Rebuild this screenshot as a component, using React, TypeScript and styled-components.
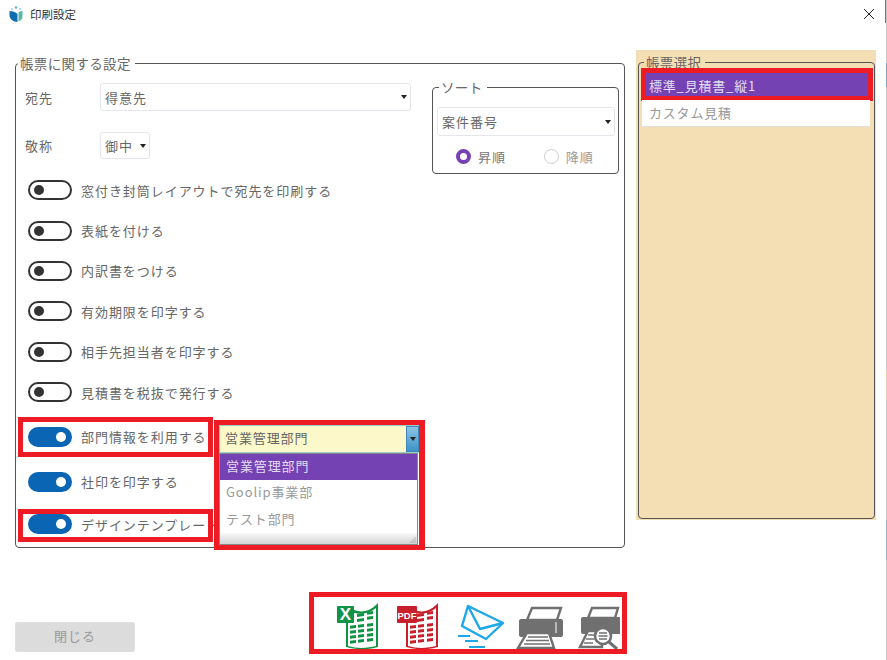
import React from 'react';
import styled, { createGlobalStyle } from 'styled-components';

const FONT = '"Noto Sans CJK JP", "Noto Sans", sans-serif';
const RED = '#ed1c24';
const PURPLE = '#7542b3';
const GRAY_ICON = '#707070';

const GlobalStyle = createGlobalStyle`
  html, body {
    margin: 0;
    padding: 0;
    background: #fff;
  }
  body {
    font-family: ${FONT};
    color: #666;
    overflow: hidden;
  }
`;

const Page = styled.div`
  width: 887px;
  height: 660px;
  overflow: hidden;
  display: flex;
  flex-direction: column;
`;

const TitleBar = styled.header`
  height: 28px;
  display: flex;
  align-items: center;
  padding: 0 13px 0 9px;
  gap: 7px;
  font-size: 11.5px;
  color: #333;
`;

const TitleText = styled.span`
  flex: 1;
`;

const CloseButton = styled.button`
  border: 0;
  background: none;
  padding: 0;
  width: 10px;
  height: 10px;
  display: flex;
`;

const Body = styled.main`
  flex: 1;
  display: flex;
  align-items: flex-start;
  padding: 22px 11px 0 15px;
  gap: 11px;
`;

const Group = styled.fieldset`
  margin: 0;
  padding: 0;
  border: 1.5px solid #555;
  border-radius: 4px;
  min-width: 0;
`;

const GroupTitle = styled.legend`
  font-size: 13.5px;
  line-height: 15px;
  letter-spacing: 0.35px;
  padding: 0 4px 0 2px;
  margin-left: 2px;
  color: #666;
`;

const SettingsGroup = styled(Group)`
  width: 610px;
  height: 492px;
  margin-top: 6px;
  box-sizing: border-box;
  position: relative;
`;

const TopArea = styled.div`
  display: flex;
  justify-content: space-between;
  padding: 12px 5px 0 9px;
`;

const FormColumn = styled.div`
  width: 386px;
  display: flex;
  flex-direction: column;
  gap: 21px;
`;

const FieldRow = styled.div`
  display: flex;
  align-items: center;
`;

const FieldLabel = styled.label`
  width: 75px;
  font-size: 13px;
  letter-spacing: 1px;
`;

const Select = styled.div<{ $width: number; $height?: number }>`
  width: ${(p) => p.$width}px;
  height: ${(p) => p.$height ?? 28}px;
  box-sizing: border-box;
  border: 1px solid #e4e6ec;
  border-radius: 3px;
  display: flex;
  align-items: center;
  justify-content: space-between;
  padding: 0 3px 0 4px;
  font-size: 13px;
  letter-spacing: 1px;
  color: #666;
`;

const Caret = styled.span`
  width: 0;
  height: 0;
  border-left: 3.5px solid transparent;
  border-right: 3.5px solid transparent;
  border-top: 4px solid #222;
`;

const SortGroup = styled(Group)`
  width: 187px;
  height: 94px;
  box-sizing: border-box;
  margin-top: -3px;
  padding: 12px 4px 0;
`;

const RadioRow = styled.div`
  display: flex;
  margin-top: 11px;
  padding-left: 19px;
  gap: 38px;
`;

const RadioItem = styled.span<{ $checked?: boolean }>`
  display: flex;
  align-items: center;
  gap: 7px;
  font-size: 13px;
  letter-spacing: 0.9px;
  color: ${(p) => (p.$checked ? '#777' : '#999')};
`;

const RadioMark = styled.span<{ $checked?: boolean }>`
  width: 15px;
  height: 15px;
  box-sizing: border-box;
  border-radius: 50%;
  border: ${(p) => (p.$checked ? `4px solid ${PURPLE}` : '1.5px solid #ccc')};
`;

const ToggleList = styled.div`
  display: flex;
  flex-direction: column;
  margin-top: -4px;
  padding-left: 12px;
`;

const ToggleRow = styled.div<{ $frame?: 'full' | 'tight'; $shift?: number }>`
  height: 40.4px;
  margin-top: ${(p) => p.$shift ?? 0}px;
  display: flex;
  align-items: center;
  gap: 9px;
  position: relative;
  font-size: 13px;
  letter-spacing: 0.95px;
  white-space: nowrap;

  ${(p) =>
    p.$frame &&
    `&::after {
      content: '';
      position: absolute;
      left: -10px;
      width: 195px;
      box-sizing: border-box;
      border: 5px solid ${RED};
      top: ${p.$frame === 'full' ? '1px' : '5px'};
      height: ${p.$frame === 'full' ? '40px' : '33px'};
    }`}
`;

const Toggle = styled.span<{ $on?: boolean }>`
  width: 44px;
  height: 20px;
  flex: none;
  box-sizing: border-box;
  border-radius: 10px;
  border: 2px solid ${(p) => (p.$on ? '#0b65b5' : '#333')};
  background: ${(p) => (p.$on ? '#0b65b5' : '#fff')};
  display: flex;
  align-items: center;
  justify-content: ${(p) => (p.$on ? 'flex-end' : 'flex-start')};
  padding: 0 4px;

  &::before {
    content: '';
    width: 10px;
    height: 10px;
    border-radius: 50%;
    background: ${(p) => (p.$on ? '#fff' : '#333')};
  }
`;

const Combo = styled.div`
  position: absolute;
  left: 198px;
  top: 349px;
  width: 211px;
  height: 130px;
  box-sizing: border-box;
  border: 5px solid ${RED};
  border-right-width: 6px;
  background: #fff;
  display: flex;
  flex-direction: column;
  z-index: 2;
`;

const ComboInput = styled.div`
  height: 28px;
  flex: none;
  display: flex;
  background: #fdf8c9;
  border: 1px solid #9cc;
  border-right: 0;
  box-sizing: border-box;
  font-size: 13px;
  letter-spacing: 0.9px;
  color: #666;
`;

const ComboText = styled.span`
  flex: 1;
  padding-left: 5px;
  line-height: 24px;
`;

const ComboArrow = styled.span`
  width: 13px;
  background: linear-gradient(#8cc4e4, #3d93c9);
  border: 1px solid #3d88b8;
  box-sizing: border-box;
  display: flex;
  align-items: center;
  justify-content: center;
`;

const ComboPanel = styled.div`
  flex: 1;
  margin-right: 1px;
  border: 1px solid #888;
  display: flex;
  flex-direction: column;
`;

const ComboOption = styled.div<{ $active?: boolean }>`
  height: 26.4px;
  flex: none;
  padding-left: 6px;
  line-height: 23px;
  font-size: 13px;
  letter-spacing: 0.9px;
  background: ${(p) => (p.$active ? PURPLE : '#fff')};
  color: ${(p) => (p.$active ? '#e4dcf2' : '#999')};
`;

const ComboFooter = styled.div`
  flex: 1;
  background: linear-gradient(#f8f8f8, #d4d4d4);
  display: flex;
  justify-content: flex-end;
  align-items: flex-end;
  padding: 0 1px 1px 0;
`;

const SidePanel = styled.aside`
  width: 240px;
  height: 470px;
  box-sizing: border-box;
  background: #f4deb3;
  padding: 5px 1px 0 2px;
`;

const FormGroup = styled(Group)`
  height: 464px;
  box-sizing: border-box;
  padding: 3px 4px 0 3px;
  position: relative;
`;

const FormItem = styled.div<{ $selected?: boolean }>`
  height: 27px;
  box-sizing: border-box;
  line-height: 25px;
  padding-left: 7px;
  font-size: 13px;
  letter-spacing: 0.8px;
  background: ${(p) => (p.$selected ? PURPLE : '#fff')};
  color: ${(p) => (p.$selected ? '#e4dcf2' : '#999')};
  position: relative;
  border-bottom: ${(p) => (p.$selected ? '0' : '1px solid #ddd')};

  ${(p) =>
    p.$selected &&
    `&::after {
      content: '';
      position: absolute;
      inset: -5px -3px -1px -1px;
      border: 5px solid ${RED};
    }`}
`;

const Footer = styled.footer`
  height: 68px;
  display: flex;
  align-items: flex-start;
  padding: 0 0 0 15px;
`;

const CloseAction = styled.button`
  width: 120px;
  height: 30px;
  margin-top: 30px;
  margin-right: 174px;
  padding: 0 0 3px;
  border: 1px solid #e0e0e0;
  border-radius: 2px;
  background: #dcdcdc;
  color: #999;
  font-family: ${FONT};
  font-size: 13px;
  letter-spacing: 1px;
`;

const ExportBar = styled.div`
  width: 318px;
  height: 62px;
  box-sizing: border-box;
  border: 5px solid ${RED};
  display: flex;
  align-items: flex-start;
  padding: 5px 0 0 23px;
  overflow: hidden;
`;

const IconSlot = styled.span<{ $width: number }>`
  width: ${(p) => p.$width}px;
  flex: none;
  display: flex;
`;

const EdgeSliver = styled.div`
  position: absolute;
  right: 0;
  top: 0;
  width: 1px;
  height: 660px;
  background: linear-gradient(
    #c8c8c8 0 63px,
    #7fa6c4 63px 87px,
    #c8c8c8 87px 370px,
    #e6cfae 370px 400px,
    #c8c8c8 400px 520px,
    #9ab6cc 520px 560px,
    #c8c8c8 560px
  );
`;

const EdgeTab = styled.div`
  position: absolute;
  right: 1px;
  top: 0;
  width: 1px;
  height: 23px;
  background: #777;
`;

const Logo = () => (
  <svg width="14" height="16" viewBox="0 0 14 16">
    <path d="M0.5 5c3 0 6 1 8 3v8C4 16 0.5 13 0.5 9z" fill="#0f6cb0" />
    <path d="M13.5 5c-1 0-3 .5-4 1.500v9c3-1 4-3 4-6z" fill="#54b9a5" />
    <circle cx="7" cy="1.500" r="1.200" fill="#5ab0e0" />
    <circle cx="3" cy="3" r="0.800" fill="#5ab0e0" />
    <circle cx="11" cy="3" r="0.800" fill="#5ab0e0" />
  </svg>
);

const cell = (x: number, y: number, w: number) => {
  const rise = w * 0.14;
  return `M${x} ${y + rise}L${x + w} ${y}v3L${x} ${y + rise + 3}z`;
};

const Sheet = ({ color, badge, badgeSize }: { color: string; badge: string; badgeSize: number }) => (
  <svg width="42" height="47" viewBox="0 0 42 47">
    <path d="M9 20h2v24c10 3 20 2 28 0V3l2-2v44c-10 3-21 3-32 0z" fill={color} />
    <path d="M17 8c8 3 16 1 22-5v3c-6 5-14 7-22 5z" fill={color} />
    <g fill={color}>
      <path d={cell(20, 11, 7)} />
      <path d={cell(30, 9, 6)} />
      <path d={cell(20, 16, 7)} />
      <path d={cell(30, 14, 6)} />
      {[23, 28, 33, 38].map((y) => (
        <g key={y}>
          <path d={cell(13, y, 6)} />
          <path d={cell(21, y - 1, 6)} />
          <path d={cell(30, y - 2, 6)} />
        </g>
      ))}
    </g>
    <rect x="0" y="4" width={badge === 'X' ? 17 : 20} height="17" rx="1" fill={color} />
    <text
      x={badge === 'X' ? 8.500 : 10}
      y={badge === 'X' ? 18 : 16.500}
      textAnchor="middle"
      fontFamily='"Liberation Sans", sans-serif'
      fontWeight="700"
      fontSize={badgeSize}
      fill="#fff"
    >
      {badge}
    </text>
  </svg>
);

const MailIcon = () => (
  <svg width="47" height="47" viewBox="0 0 47 47">
    <g fill="none" stroke="#1ea7ea" strokeWidth="2.400" strokeLinejoin="round">
      <path d="M10 4 45 21 28 37 4 24z" />
      <path d="M10 4l12 23 23-6" />
    </g>
    <g fill="#1ea7ea">
      <rect x="0" y="33" width="12" height="2" />
      <rect x="7" y="38" width="13" height="2" />
      <rect x="11" y="44" width="16" height="2" />
    </g>
  </svg>
);

const PrinterIcon = () => (
  <svg width="48" height="47" viewBox="0 0 48 47">
    <path d="M16 6h29l-4 12H11z" fill="#fff" stroke={GRAY_ICON} strokeWidth="2.400" />
    <path d="M5 17h40a2 2 0 0 1 2 2v14a2 2 0 0 1-2 2H5a2 2 0 0 1-2-2V19a2 2 0 0 1 2-2z" fill={GRAY_ICON} />
    <path d="M40 20v11" stroke="#fff" strokeWidth="1" />
    <path d="M11 31h22l5 15H2z" fill="#fff" stroke={GRAY_ICON} strokeWidth="2.400" />
    <path d="M12 35h20M10 38.500h23M8 42h26" stroke={GRAY_ICON} strokeWidth="1.400" />
  </svg>
);

const PreviewIcon = () => (
  <svg width="42" height="47" viewBox="0 0 42 47">
    <path d="M14 6h26l-3 10H10z" fill="#fff" stroke={GRAY_ICON} strokeWidth="2.400" />
    <path d="M5 15h36a2 2 0 0 1 2 2v15H5a2 2 0 0 1-2-2V17a2 2 0 0 1 2-2z" fill={GRAY_ICON} />
    <path d="M10 29h14v16H2z" fill="#fff" stroke={GRAY_ICON} strokeWidth="2.400" />
    <path d="M10 33h8M8 37h8M6 41h9" stroke={GRAY_ICON} strokeWidth="1.400" />
    <circle cx="25" cy="34" r="8" fill="#fff" stroke={GRAY_ICON} strokeWidth="2.600" />
    <path d="M21 31h8M20.500 34h9M21 37h8" stroke={GRAY_ICON} strokeWidth="1.400" />
    <path d="M31 40l8 7" stroke={GRAY_ICON} strokeWidth="3" />
  </svg>
);

const TOGGLES = [
  '窓付き封筒レイアウトで宛先を印刷する',
  '表紙を付ける',
  '内訳書をつける',
  '有効期限を印字する',
  '相手先担当者を印字する',
  '見積書を税抜で発行する',
];

export default function App() {
  return (
    <Page>
      <GlobalStyle />
      <TitleBar>
        <Logo />
        <TitleText>印刷設定</TitleText>
        <CloseButton>
          <svg width="10" height="10" viewBox="0 0 10 10">
            <path d="M0 0l10 10M10 0L0 10" stroke="#222" strokeWidth="1" />
          </svg>
        </CloseButton>
      </TitleBar>
      <Body>
        <SettingsGroup>
          <GroupTitle>帳票に関する設定</GroupTitle>
          <TopArea>
            <FormColumn>
              <FieldRow>
                <FieldLabel>宛先</FieldLabel>
                <Select $width={311}>
                  得意先
                  <Caret />
                </Select>
              </FieldRow>
              <FieldRow>
                <FieldLabel>敬称</FieldLabel>
                <Select $width={50} $height={27}>
                  御中
                  <Caret />
                </Select>
              </FieldRow>
            </FormColumn>
            <SortGroup>
              <GroupTitle>ソート</GroupTitle>
              <Select $width={178} $height={29}>
                案件番号
                <Caret />
              </Select>
              <RadioRow>
                <RadioItem $checked>
                  <RadioMark $checked />
                  昇順
                </RadioItem>
                <RadioItem>
                  <RadioMark />
                  降順
                </RadioItem>
              </RadioRow>
            </SortGroup>
          </TopArea>
          <ToggleList>
            {TOGGLES.map((t) => (
              <ToggleRow key={t}>
                <Toggle />
                {t}
              </ToggleRow>
            ))}
            <ToggleRow $frame="full" $shift={4}>
              <Toggle $on />
              部門情報を利用する
            </ToggleRow>
            <ToggleRow $shift={5}>
              <Toggle $on />
              社印を印字する
            </ToggleRow>
            <ToggleRow $frame="tight" $shift={2}>
              <Toggle $on />
              デザインテンプレート
            </ToggleRow>
          </ToggleList>
          <Combo>
            <ComboInput>
              <ComboText>営業管理部門</ComboText>
              <ComboArrow>
                <Caret />
              </ComboArrow>
            </ComboInput>
            <ComboPanel>
              <ComboOption $active>営業管理部門</ComboOption>
              <ComboOption>Goolip事業部</ComboOption>
              <ComboOption>テスト部門</ComboOption>
              <ComboFooter>
                <svg width="6" height="6" viewBox="0 0 6 6">
                  <path d="M4.500 0.500h1v1h-1zM2.500 2.500h1v1h-1zM4.500 2.500h1v1h-1zM0.500 4.500h1v1h-1zM2.500 4.500h1v1h-1zM4.500 4.500h1v1h-1z" fill="#888" />
                </svg>
              </ComboFooter>
            </ComboPanel>
          </Combo>
        </SettingsGroup>
        <SidePanel>
          <FormGroup>
            <GroupTitle>帳票選択</GroupTitle>
            <FormItem $selected>標準_見積書_縦1</FormItem>
            <FormItem>カスタム見積</FormItem>
          </FormGroup>
        </SidePanel>
      </Body>
      <Footer>
        <CloseAction>閉じる</CloseAction>
        <ExportBar>
          <IconSlot $width={60}>
            <Sheet color="#0f9445" badge="X" badgeSize={17} />
          </IconSlot>
          <IconSlot $width={61}>
            <Sheet color="#c8202c" badge="PDF" badgeSize={9.500} />
          </IconSlot>
          <IconSlot $width={58}>
            <MailIcon />
          </IconSlot>
          <IconSlot $width={62}>
            <PrinterIcon />
          </IconSlot>
          <IconSlot $width={42}>
            <PreviewIcon />
          </IconSlot>
        </ExportBar>
      </Footer>
      <EdgeTab />
      <EdgeSliver />
    </Page>
  );
}
